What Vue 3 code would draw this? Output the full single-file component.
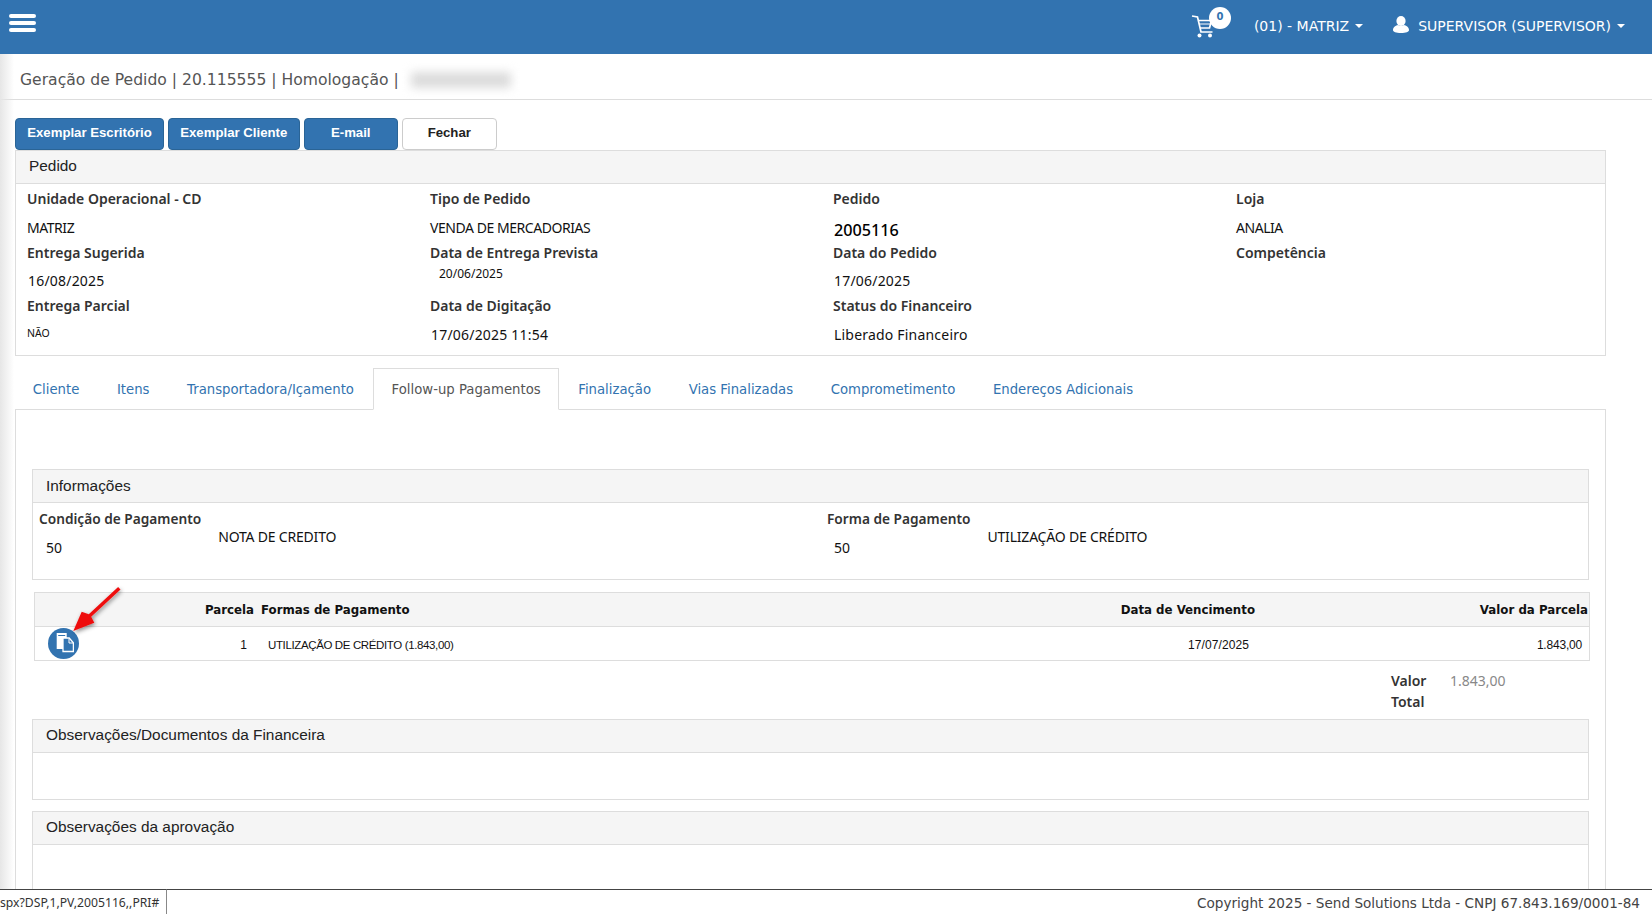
<script setup>
const campos = [
  { label: 'Unidade Operacional - CD', valor: 'MATRIZ', tipo: 'caixa' },
  { label: 'Tipo de Pedido', valor: 'VENDA DE MERCADORIAS', tipo: 'caixa' },
  { label: 'Pedido', valor: '2005116', tipo: 'grande' },
  { label: 'Loja', valor: 'ANALIA', tipo: 'caixa' },
  { label: 'Entrega Sugerida', valor: '16/08/2025', tipo: 'data' },
  { label: 'Data de Entrega Prevista', valor: '20/06/2025', tipo: 'recuo' },
  { label: 'Data do Pedido', valor: '17/06/2025', tipo: 'data' },
  { label: 'Competência', valor: '' },
  { label: 'Entrega Parcial', valor: 'NÃO', tipo: 'mini' },
  { label: 'Data de Digitação', valor: '17/06/2025 11:54', tipo: 'data baixo' },
  { label: 'Status do Financeiro', valor: 'Liberado Financeiro', tipo: 'data baixo' }
]

const abas = ['Cliente', 'Itens', 'Transportadora/Içamento', 'Follow-up Pagamentos', 'Finalização', 'Vias Finalizadas', 'Comprometimento', 'Endereços Adicionais']
const abaAtiva = 'Follow-up Pagamentos'
</script>

<template>
  <div class="page">
    <header class="topo">
      <div class="burger"><span></span><span></span><span></span></div>
      <div class="topo-dir">
        <div class="carrinho">
          <svg width="26" height="26" viewBox="0 0 26 26" fill="none" stroke="#fff" stroke-width="1.700">
            <path d="M1 3l5.500 1 3.500 15h11.500" />
            <path d="M7 7.500h13.500l-2 7.500H9" />
            <path d="M8 11h12" stroke-width="1" />
            <circle cx="8.500" cy="22.500" r="2" fill="#fff" stroke="none" />
            <circle cx="19" cy="22.500" r="2" fill="#fff" stroke="none" />
          </svg>
          <span class="badge">0</span>
        </div>
        <span class="menu">(01) - MATRIZ <i class="caret"></i></span>
        <span class="menu usuario">
          <svg width="16" height="17" viewBox="0 0 16 17" fill="#fff">
            <ellipse cx="8" cy="5" rx="4.6" ry="5" />
            <path d="M0 14c0-3 3-4.500 5-5 1.500 1 4.500 1 6 0 2 .5 5 2 5 5 0 2-3 3-8 3s-8-1-8-3z" />
          </svg>
          SUPERVISOR (SUPERVISOR) <i class="caret"></i>
        </span>
      </div>
    </header>

    <div class="titulo">
      <span>Geração de Pedido | 20.115555 | Homologação |</span>
      <span class="borrado"></span>
    </div>

    <main class="conteudo">
      <div class="botoes">
        <button class="btn w1">Exemplar Escritório</button>
        <button class="btn w2">Exemplar Cliente</button>
        <button class="btn w3">E-mail</button>
        <button class="btn branco w3">Fechar</button>
      </div>

      <section class="painel pedido">
        <div class="painel-tit">Pedido</div>
        <div class="campos">
          <div v-for="c in campos" :key="c.label" class="campo">
            <label>{{ c.label }}</label>
            <span :class="['valor', c.tipo]">{{ c.valor }}</span>
          </div>
        </div>
      </section>

      <nav class="abas">
        <a v-for="a in abas" :key="a" :class="['aba', { ativa: a === abaAtiva }]">{{ a }}</a>
      </nav>

      <section class="aba-corpo">
        <div class="painel info">
          <div class="painel-tit">Informações</div>
          <div class="info-corpo">
            <div class="info-col col-a">
              <div>
                <label>Condição de Pagamento</label>
                <span class="cod">50</span>
              </div>
              <span class="desc">NOTA DE CREDITO</span>
            </div>
            <div class="info-col col-b">
              <div>
                <label>Forma de Pagamento</label>
                <span class="cod">50</span>
              </div>
              <span class="desc">UTILIZAÇÃO DE CRÉDITO</span>
            </div>
          </div>
        </div>

        <div class="tabela">
          <div class="linha cab">
            <span class="c-icone"></span>
            <span class="c-parc">Parcela</span>
            <span class="c-forma">Formas de Pagamento</span>
            <span class="c-data">Data de Vencimento</span>
            <span class="c-valor">Valor da Parcela</span>
          </div>
          <div class="linha corpo">
            <span class="c-icone">
              <span class="doc-btn">
                <svg width="20" height="20" viewBox="0 0 20 20" fill="none">
                  <path d="M2.700 0h10v16h-10z" fill="#fff" />
                  <path d="M4.200 2.500h7" stroke="#3273b0" stroke-width="1" />
                  <path d="M9 5h6.200l4.200 4.800v8.700H9z" fill="#3273b0" stroke="#fff" stroke-width="1.300" />
                  <path d="M15 5.500v4.500h4" stroke="#fff" stroke-width="1" />
                </svg>
              </span>
            </span>
            <span class="c-parc">1</span>
            <span class="c-forma">UTILIZAÇÃO DE CRÉDITO (1.843,00)</span>
            <span class="c-data">17/07/2025</span>
            <span class="c-valor">1.843,00</span>
          </div>
        </div>

        <div class="total">
          <label>Valor<br />Total</label>
          <span>1.843,00</span>
        </div>

        <div class="painel obs1">
          <div class="painel-tit">Observações/Documentos da Financeira</div>
        </div>
        <div class="painel obs2">
          <div class="painel-tit">Observações da aprovação</div>
        </div>

        <svg class="seta" width="70" height="70" viewBox="0 0 70 70">
          <defs>
            <filter id="sombra" x="-30%" y="-30%" width="160%" height="160%">
              <feDropShadow dx="1" dy="2" stdDeviation="2" flood-color="#000" flood-opacity="0.45" />
            </filter>
          </defs>
          <path d="M55.100 8 L25.800 35.200 L18.700 32.700 L10.300 52 L31.300 43.700 L28.200 37.800 L57.500 10.600 Z" fill="#ee1111" filter="url(#sombra)" />
        </svg>
      </section>
    </main>

    <footer class="rodape">Copyright 2025 - Send Solutions Ltda - CNPJ 67.843.169/0001-84</footer>
    <div class="status">spx?DSP,1,PV,2005116,,PRI#</div>
    <div class="sombra-esq"></div>
  </div>
</template>

<style scoped>
.page {
  position: relative;
  height: 914px;
  width: 1652px;
  display: flex;
  flex-direction: column;
  overflow: hidden;
  background: #fff;
  font-family: "DejaVu Sans", sans-serif;
  color: #333;
}

.topo {
  height: 54px;
  flex: none;
  background: #3273b0;
  display: flex;
  justify-content: space-between;
  color: #fff;
}
.burger {
  margin: 14px 0 0 9px;
  width: 27px;
  display: flex;
  flex-direction: column;
  gap: 3.500px;
}
.burger span {
  height: 3.500px;
  border-radius: 2px;
  background: #fff;
}
.topo-dir {
  display: flex;
  align-items: center;
  padding: 0 27px 2px 0;
  font-size: 14px;
}
.carrinho {
  position: relative;
  width: 26px;
  height: 26px;
  margin: 0 37px 0 0;
}
.badge {
  position: absolute;
  left: 18px;
  top: -6px;
  width: 22px;
  height: 22px;
  border-radius: 50%;
  background: #fff;
  color: #3273b0;
  font-size: 10px;
  font-weight: bold;
  text-align: center;
  line-height: 20px;
}
.menu {
  white-space: nowrap;
  display: flex;
  align-items: center;
  gap: 4px;
}
.usuario {
  margin-left: 30px;
}
.usuario svg {
  margin-right: 5px;
  position: relative;
  top: -2px;
}
.caret {
  display: inline-block;
  margin-left: 2px;
  border-top: 4px solid #fff;
  border-left: 4px solid transparent;
  border-right: 4px solid transparent;
}

.titulo {
  height: 46px;
  flex: none;
  display: flex;
  align-items: center;
  padding: 6px 0 0 20px;
  box-sizing: border-box;
  border-bottom: 1px solid #ddd;
  font-size: 15.600px;
  color: #555;
  white-space: pre;
}
.borrado {
  width: 100px;
  height: 16px;
  margin-left: 12px;
  background: #dcdcdc;
  filter: blur(5px);
}

.conteudo {
  flex: 1;
  min-height: 0;
  padding: 18px 46px 0 15px;
  display: flex;
  flex-direction: column;
  font-family: "Noto Sans", sans-serif;
}

.botoes {
  display: flex;
  flex: none;
  gap: 4px;
  height: 32px;
}
.btn {
  height: 32px;
  padding: 0 0 3px;
  border: 1px solid #2a6496;
  border-radius: 4px;
  background: #3273b0;
  color: #fff;
  font-family: "Liberation Sans", sans-serif;
  font-size: 13.200px;
  font-weight: bold;
}
.w1 { width: 149px; }
.w2 { width: 131.500px; }
.w3 { width: 94.500px; }
.btn.branco {
  background: #fff;
  border-color: #ccc;
  color: #222;
}

.painel {
  flex: none;
  border: 1px solid #ddd;
  box-sizing: border-box;
}
.painel-tit {
  height: 33px;
  box-sizing: border-box;
  padding-left: 13px;
  line-height: 30px;
  background: #f5f5f5;
  border-bottom: 1px solid #ddd;
  font-family: "Liberation Sans", sans-serif;
  font-size: 15.400px;
  color: #222;
}
.info .painel-tit {
  line-height: 32px;
}
.pedido {
  height: 206px;
}
.campos {
  display: grid;
  grid-template-columns: repeat(4, 403px);
  grid-template-rows: 54px 53px 53px;
  padding: 2px 0 0 11px;
}
.campo {
  display: flex;
  flex-direction: column;
}
label {
  font-size: 14px;
  font-weight: 600;
  color: #333;
  line-height: 26px;
}
.valor {
  font-size: 14px;
  color: #111;
  line-height: 30px;
  padding-left: 1px;
}
.valor.caixa {
  letter-spacing: -0.45px;
  padding: 1px 0 0;
}
.valor.data {
  letter-spacing: 0.2px;
}
.valor.baixo {
  padding-top: 1px;
}
.valor.grande {
  font-size: 16.200px;
  font-weight: 500;
  padding-top: 3px;
  color: #000;
}
.valor.recuo {
  font-size: 12px;
  padding-left: 9px;
  line-height: 16px;
}
.valor.mini {
  font-size: 10.500px;
  padding-left: 0;
  line-height: 28px;
}

.abas {
  display: flex;
  height: 42px;
  margin-top: 12px;
  flex: none;
  font-family: "DejaVu Sans", sans-serif;
  font-size: 13.250px;
}
.aba {
  padding: 0 17.800px;
  line-height: 41px;
  color: #3273b0;
  border: 1px solid transparent;
}
.aba:first-child {
  margin-left: -1px;
}
.aba.ativa {
  color: #555;
  background: #fff;
  border-color: #ddd;
  border-bottom-color: #fff;
  position: relative;
  z-index: 1;
}

.aba-corpo {
  position: relative;
  flex: 1;
  margin-top: -1px;
  border: 1px solid #ddd;
  border-bottom: none;
  padding: 59px 16px 0;
}
.info {
  height: 111px;
}
.info-corpo {
  display: flex;
  padding-left: 6px;
}
.info-col {
  display: flex;
  gap: 17px;
}
.col-a { width: 788px; }
.col-b { width: 700px; }
.info-col label {
  display: block;
  font-size: 13.700px;
  line-height: 32px;
  white-space: nowrap;
}
.cod {
  display: block;
  padding-left: 7px;
  font-size: 14px;
  line-height: 26px;
  color: #111;
}
.desc {
  font-size: 14px;
  letter-spacing: -0.2px;
  color: #111;
  line-height: 68px;
}

.tabela {
  flex: none;
  margin: 12px -1px 0 2px;
  border: 1px solid #ddd;
  font-family: "DejaVu Sans", sans-serif;
}
.linha {
  display: flex;
  align-items: center;
  height: 33px;
}
.cab {
  background: #f5f5f5;
  border-bottom: 1px solid #ddd;
  font-size: 11.800px;
  font-weight: bold;
  color: #111;
}
.corpo {
  box-sizing: border-box;
  padding-top: 3px;
  font-family: "Liberation Sans", sans-serif;
  font-size: 12px;
  color: #111;
}
.c-icone { width: 169px; flex: none; padding-left: 13px; box-sizing: border-box; }
.c-parc { width: 50px; flex: none; text-align: right; box-sizing: border-box; }
.c-forma { flex: 1; padding-left: 7px; }
.c-data { width: 200px; text-align: right; box-sizing: border-box; }
.c-valor { width: 334px; text-align: right; padding-right: 1px; box-sizing: border-box; }
.corpo .c-parc { padding-right: 7px; }
.corpo .c-forma { padding-left: 14px; font-size: 11.500px; letter-spacing: -0.37px; }
.corpo .c-data { padding-right: 6px; letter-spacing: 0.1px; }
.corpo .c-valor { padding-right: 7px; letter-spacing: -0.2px; }
.doc-btn {
  display: flex;
  align-items: center;
  justify-content: center;
  width: 31px;
  height: 31px;
  border-radius: 50%;
  background: #3273b0;
  margin-top: -4px;
}

.total {
  display: flex;
  flex: none;
  height: 49px;
  padding-left: 1359px;
  font-size: 14px;
  line-height: 21px;
  padding-top: 9px;
  box-sizing: content-box;
}
.total label {
  width: 59px;
  line-height: 21px;
}
.total span {
  color: #888;
  font-size: 14px;
}
.obs1 {
  height: 81px;
}
.obs2 {
  height: 90px;
  margin-top: 11px;
}
.seta {
  position: absolute;
  left: 47px;
  top: 169px;
}

.rodape {
  height: 25px;
  flex: none;
  box-sizing: border-box;
  border-top: 1px solid #444;
  background: #fff;
  text-align: right;
  padding-right: 12px;
  font-size: 13.600px;
  line-height: 27px;
  color: #444;
  position: relative;
}
.status {
  position: absolute;
  left: 0;
  bottom: 0;
  height: 25px;
  width: 167px;
  box-sizing: border-box;
  border-top: 1px solid #444;
  border-right: 1px solid #888;
  background: #fff;
  font-family: "Noto Sans", sans-serif;
  font-size: 12.200px;
  line-height: 26px;
  color: #333;
}
.sombra-esq {
  position: absolute;
  left: 0;
  top: 54px;
  bottom: 25px;
  width: 14px;
  background: linear-gradient(to right, #e6e6e6, rgba(255, 255, 255, 0));
  pointer-events: none;
}
</style>

<style>
body {
  margin: 0;
}
</style>
